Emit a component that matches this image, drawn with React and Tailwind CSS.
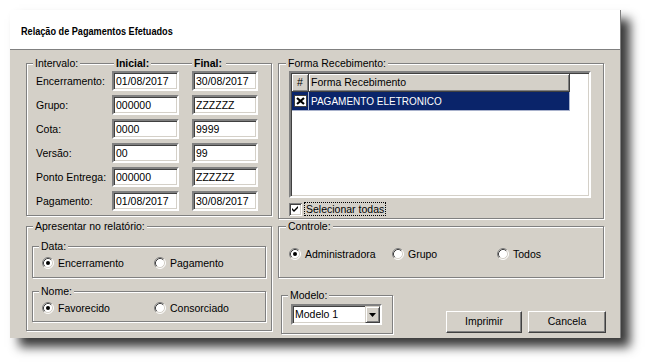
import React from 'react';

function Radio({ checked }) {
  return (
    <svg width="12" height="12" viewBox="0 0 12 12" className="shrink-0 block">
      <circle cx="6" cy="6" r="5" fill="#fff" />
      <path d="M2.11 9.89 A5.5 5.5 0 0 1 9.89 2.11" stroke="#808080" fill="none" />
      <path d="M2.82 9.18 A4.5 4.5 0 0 1 9.18 2.82" stroke="#404040" fill="none" />
      <path d="M9.89 2.11 A5.5 5.5 0 0 1 2.11 9.89" stroke="#ffffff" fill="none" />
      <path d="M9.18 2.82 A4.5 4.5 0 0 1 2.82 9.18" stroke="#d4d0c8" fill="none" />
      {checked && <circle cx="6" cy="6" r="2" fill="#000" />}
    </svg>
  );
}

function RadioItem({ checked, label, className }) {
  return (
    <div className={'flex items-center h-[12px] ' + (className || '')}>
      <Radio checked={checked} />
      <span className="ml-[4px] leading-[13px]">{label}</span>
    </div>
  );
}

function Field({ value, className }) {
  return (
    <div
      className={
        'h-[20px] bg-white border-2 border-t-[#808080] border-l-[#808080] border-r-white border-b-white shadow-[inset_1px_1px_0_#404040,inset_-1px_-1px_0_#d4d0c8] pl-[2px] leading-[16px] whitespace-nowrap overflow-hidden ' +
        (className || '')
      }
    >
      {value}
    </div>
  );
}

function Group({ legend, className, legendClass, children }) {
  return (
    <fieldset
      className={
        'border border-[#808080] shadow-[inset_1px_1px_0_#fff,1px_1px_0_#fff] min-w-0 ' + (className || '')
      }
    >
      <legend className={'px-[2px] leading-[13px] bg-[#d4d0c8] ' + (legendClass || 'ml-[-3px]')}>{legend}</legend>
      {children}
    </fieldset>
  );
}

function Seg({ w }) {
  return <div className={'self-start mt-[6px] h-[2px] bg-white border-t border-[#808080] ' + w} />;
}

function Button({ children, className }) {
  return (
    <div
      className={
        'h-[22px] flex items-center justify-center border border-t-white border-l-white border-r-[#404040] border-b-[#404040] shadow-[inset_-1px_-1px_0_#808080] shrink-0 ' +
        (className || '')
      }
    >
      {children}
    </div>
  );
}

const rows = [
  ['Encerramento:', '01/08/2017', '30/08/2017'],
  ['Grupo:', '000000', 'ZZZZZZ'],
  ['Cota:', '0000', '9999'],
  ['Versão:', '00', '99'],
  ['Ponto Entrega:', '000000', 'ZZZZZZ'],
  ['Pagamento:', '01/08/2017', '30/08/2017'],
];

export default function App() {
  return (
    <div className="w-[647px] h-[362px] bg-white pt-[10px] pl-[10px] font-['Liberation_Sans',Arial,sans-serif] text-[10.5px] text-black overflow-hidden">
      <div className="w-[611px] border-r border-[#808080] shadow-[9px_9px_10px_rgba(0,0,0,0.78)]">
        {/* header */}
        <div className="h-[39px] bg-white pl-[11px] pt-[14px]">
          <span className="inline-block origin-left scale-x-[0.83] font-bold text-[11px] leading-[13px] whitespace-nowrap">
            Relação de Pagamentos Efetuados
          </span>
        </div>
        {/* panel */}
        <div className="h-[289px] bg-[#d4d0c8] border-t border-[#808080] pl-[16px] pt-[7px] grid grid-cols-[246px_326px] gap-x-[6px] items-start">
          {/* left column */}
          <div className="flex flex-col">
            <Group
              className="h-[159px] pl-[9px]"
              legend={
                <div className="flex items-start">
                  <span className="w-[45px]">Intervalo:</span>
                  <Seg w="w-[34px]" />
                  <span className="w-[37px] pl-[2px] font-bold">Inicial:</span>
                  <Seg w="w-[41px]" />
                  <span className="pl-[2px] pr-[2px] font-bold">Final:</span>
                </div>
              }
            >
              <div className="pt-[1px] flex flex-col gap-[4px]">
                {rows.map((r) => (
                  <div key={r[0]} className="flex items-center">
                    <span className="w-[76px] shrink-0 leading-[13px]">{r[0]}</span>
                    <Field value={r[1]} className="w-[67px]" />
                    <Field value={r[2]} className="w-[66px] ml-[13px]" />
                  </div>
                ))}
              </div>
            </Group>
            <Group className="h-[111px] mt-[4px] pl-[5px]" legendClass="ml-[1px]" legend="Apresentar no relatório:">
              <Group className="w-[234px] h-[38px] mt-[7px] pl-[9px]" legend="Data:">
                <div className="pt-[4px] flex">
                  <RadioItem checked label="Encerramento" className="w-[112px]" />
                  <RadioItem label="Pagamento" />
                </div>
              </Group>
              <Group className="w-[234px] h-[37px] mt-[7px] pl-[9px]" legend="Nome:">
                <div className="pt-[4px] flex">
                  <RadioItem checked label="Favorecido" className="w-[112px]" />
                  <RadioItem label="Consorciado" />
                </div>
              </Group>
            </Group>
          </div>

          {/* right column */}
          <div className="flex flex-col">
            <Group className="h-[162px] pl-[10px]" legend="Forma Recebimento:">
              <div className="mt-[1px] w-[302px] h-[127px] bg-white border-2 border-t-[#808080] border-l-[#808080] border-r-white border-b-white shadow-[inset_1px_1px_0_#404040,inset_-1px_-1px_0_#d4d0c8] p-[1px]">
                <div className="flex h-[18px] text-[10.5px]">
                  <div className="w-[17px] bg-[#d4d0c8] border-r border-b border-[#404040] shadow-[inset_1px_1px_0_#fff,inset_-1px_-1px_0_#808080] flex items-center justify-center leading-[13px]">
                    #
                  </div>
                  <div className="w-[261px] bg-[#d4d0c8] border-r border-b border-[#404040] shadow-[inset_1px_1px_0_#fff,inset_-1px_-1px_0_#808080] pl-[2px] flex items-center leading-[13px]">
                    Forma Recebimento
                  </div>
                </div>
                <div className="flex h-[19px] text-[10px]">
                  <div className="w-[17px] bg-[#0a246a] border-r border-b border-[#a9b2cc] flex items-center justify-center">
                    <svg width="13" height="12" viewBox="0 0 13 12" className="block">
                      <rect x="0.5" y="0.5" width="12" height="11" fill="#fff" stroke="#404040" />
                      <path d="M3 3 L10 9 M10 3 L3 9" stroke="#000" strokeWidth="2.2" />
                    </svg>
                  </div>
                  <div className="w-[261px] bg-[#0a246a] border-r border-b border-[#a9b2cc] text-white pl-[2px] flex items-center leading-[13px]">
                    PAGAMENTO ELETRONICO
                  </div>
                </div>
              </div>
              <div className="mt-[4px] flex items-center h-[14px]">
                <svg width="13" height="13" viewBox="0 0 13 13" className="shrink-0 block">
                  <rect x="0" y="0" width="13" height="13" fill="#808080" />
                  <rect x="1" y="1" width="12" height="12" fill="#fff" />
                  <rect x="1" y="1" width="11" height="11" fill="#404040" />
                  <rect x="2" y="2" width="10" height="10" fill="#d4d0c8" />
                  <rect x="2" y="2" width="9" height="9" fill="#fff" />
                  <polygon points="3,5 5,7 9,3 9,5 5,9 3,7" fill="#000" />
                </svg>
                <span className="ml-[2px] px-[1px] border border-dotted border-black leading-[12px]">Selecionar todas</span>
              </div>
            </Group>
            <Group className="h-[58px] mt-[1px] pl-[10px]" legend="Controle:">
              <div className="pt-[15px] flex">
                <RadioItem checked label="Administradora" className="w-[103px]" />
                <RadioItem label="Grupo" className="w-[105px]" />
                <RadioItem label="Todos" />
              </div>
            </Group>
            <div className="mt-[11px] pl-[3px] flex items-start">
              <Group className="w-[112px] h-[45px] shrink-0 pl-[9px]" legend="Modelo:">
                <div className="mt-[2px] w-[91px] h-[21px] bg-white border-2 border-t-[#808080] border-l-[#808080] border-r-white border-b-white shadow-[inset_1px_1px_0_#404040,inset_-1px_-1px_0_#d4d0c8] flex">
                  <span className="flex-1 pl-[2px] leading-[17px]">Modelo 1</span>
                  <div className="w-[15px] h-[17px] bg-[#d4d0c8] border border-t-[#d4d0c8] border-l-[#d4d0c8] border-r-[#404040] border-b-[#404040] shadow-[inset_1px_1px_0_#fff,inset_-1px_-1px_0_#808080] flex items-center justify-center">
                    <svg width="7" height="4" viewBox="0 0 7 4" className="block">
                      <polygon points="0,0 7,0 3.5,4" fill="#000" />
                    </svg>
                  </div>
                </div>
              </Group>
              <Button className="w-[76px] ml-[53px] mt-[22px]">Imprimir</Button>
              <Button className="w-[78px] ml-[6px] mt-[22px]">Cancela</Button>
            </div>
          </div>
        </div>
      </div>
    </div>
  );
}
